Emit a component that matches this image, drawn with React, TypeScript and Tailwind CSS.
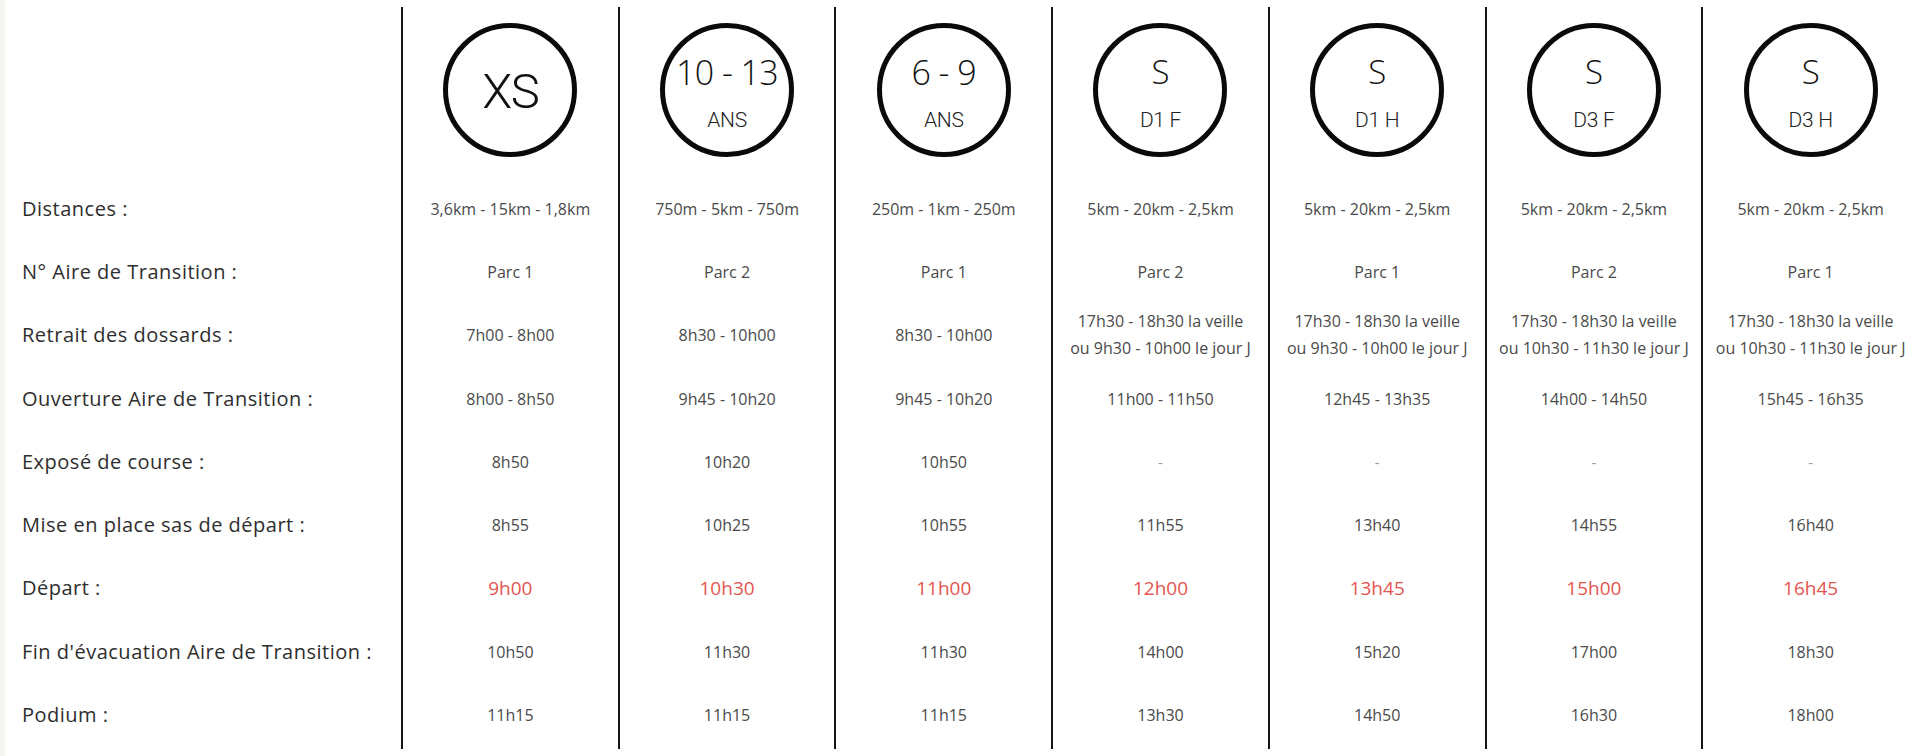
import React from "react";

type Col = {
  big: string;
  small?: string;
  kind: "xs" | "num" | "s";
  values: (string | string[])[];
};

const labels = [
  "Distances :",
  "N° Aire de Transition :",
  "Retrait des dossards :",
  "Ouverture Aire de Transition :",
  "Exposé de course :",
  "Mise en place sas de départ :",
  "Départ :",
  "Fin d'évacuation Aire de Transition :",
  "Podium :",
];

const J1 = ["17h30 - 18h30 la veille", "ou 9h30 - 10h00 le jour J"];
const J3 = ["17h30 - 18h30 la veille", "ou 10h30 - 11h30 le jour J"];

const cols: Col[] = [
  { big: "XS", kind: "xs", values: ["3,6km - 15km - 1,8km", "Parc 1", "7h00 - 8h00", "8h00 - 8h50", "8h50", "8h55", "9h00", "10h50", "11h15"] },
  { big: "10 - 13", small: "ANS", kind: "num", values: ["750m - 5km - 750m", "Parc 2", "8h30 - 10h00", "9h45 - 10h20", "10h20", "10h25", "10h30", "11h30", "11h15"] },
  { big: "6 - 9", small: "ANS", kind: "num", values: ["250m - 1km - 250m", "Parc 1", "8h30 - 10h00", "9h45 - 10h20", "10h50", "10h55", "11h00", "11h30", "11h15"] },
  { big: "S", small: "D1 F", kind: "s", values: ["5km - 20km - 2,5km", "Parc 2", J1, "11h00 - 11h50", "-", "11h55", "12h00", "14h00", "13h30"] },
  { big: "S", small: "D1 H", kind: "s", values: ["5km - 20km - 2,5km", "Parc 1", J1, "12h45 - 13h35", "-", "13h40", "13h45", "15h20", "14h50"] },
  { big: "S", small: "D3 F", kind: "s", values: ["5km - 20km - 2,5km", "Parc 2", J3, "14h00 - 14h50", "-", "14h55", "15h00", "17h00", "16h30"] },
  { big: "S", small: "D3 H", kind: "s", values: ["5km - 20km - 2,5km", "Parc 1", J3, "15h45 - 16h35", "-", "16h40", "16h45", "18h30", "18h00"] },
];

const bodyFont = "font-['Open_Sans',sans-serif]";

function Badge({ col }: { col: Col }) {
  if (col.kind === "xs") {
    return (
      <div className="w-[134px] h-[134px] rounded-full border-[5px] border-[#0a0a0a] flex flex-col items-center justify-center">
        <span className="font-['Roboto',sans-serif] font-light text-[49px] leading-none tracking-[-1.5px] text-[#111] mt-[3px]">
          XS
        </span>
      </div>
    );
  }
  const isNum = col.kind === "num";
  return (
    <div className="w-[134px] h-[134px] rounded-full border-[5px] border-[#0a0a0a] flex flex-col items-center pt-[27px]">
      <span
        className={`${bodyFont} font-light text-[#111] leading-none whitespace-nowrap ${
          isNum ? "text-[34px] tracking-[-0.6px]" : "text-[33px]"
        }`}
      >
        {col.big}
      </span>
      <span
        className={`font-['Roboto',sans-serif] font-light text-[21px] leading-none text-[#222] tracking-[-0.3px] ${
          isNum ? "mt-[21px]" : "mt-[22px]"
        }`}
      >
        {col.small}
      </span>
    </div>
  );
}

function Value({ v, row }: { v: string | string[]; row: number }) {
  if (Array.isArray(v)) {
    return (
      <div className={`${bodyFont} text-[16px] leading-[27px] text-[#4a4a4a] text-center whitespace-nowrap`}>
        {v.map((l) => (
          <div key={l}>{l}</div>
        ))}
      </div>
    );
  }
  if (row === 6) {
    return <span className={`${bodyFont} text-[19px] text-[#e45450] whitespace-nowrap`}>{v}</span>;
  }
  if (v === "-") {
    return <span className={`${bodyFont} text-[15px] text-[#9a9a9a]`}>-</span>;
  }
  return <span className={`${bodyFont} text-[16px] text-[#4a4a4a] whitespace-nowrap`}>{v}</span>;
}

export default function App() {
  return (
    <div className="w-[1918px] h-[756px] bg-white flex overflow-hidden">
      <div className="w-[5px] h-full bg-[#f3f5f1] shrink-0" />
      <div className="w-[396px] shrink-0 flex flex-col pt-[7px]">
        <div className="h-[170px] shrink-0" />
        {labels.map((l) => (
          <div
            key={l}
            className={`h-[63.3px] shrink-0 flex items-center pl-[17px] ${bodyFont} text-[20px] tracking-[0.5px] text-[#2e2e2e] whitespace-nowrap`}
          >
            {l}
          </div>
        ))}
      </div>
      <div className="flex-1 grid grid-cols-7 pt-[7px] pb-[7px]">
        {cols.map((c, i) => (
          <div key={i} className="border-l-2 border-[#161616] flex flex-col">
            <div className="h-[170px] shrink-0 flex justify-center pt-[16px]">
              <Badge col={c} />
            </div>
            {c.values.map((v, r) => (
              <div key={r} className="h-[63.3px] shrink-0 flex items-center justify-center">
                <Value v={v} row={r} />
              </div>
            ))}
          </div>
        ))}
      </div>
    </div>
  );
}
